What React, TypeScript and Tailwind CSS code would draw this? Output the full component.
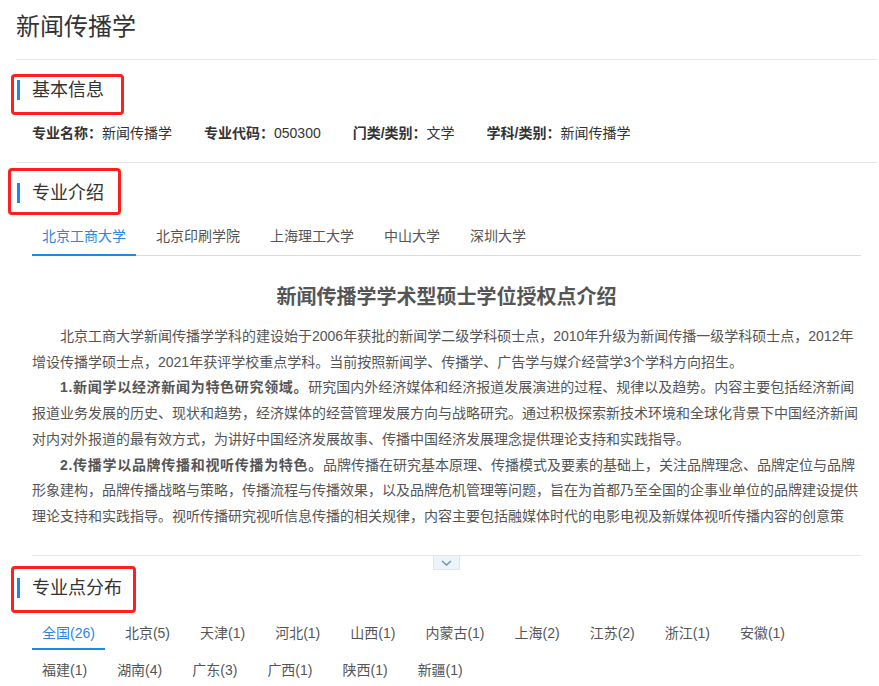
import React from "react";

const FONT = '"Liberation Sans", "Noto Sans CJK SC", sans-serif';

function SectionHeading({ title, box }: { title: string; box: string }) {
  return (
    <div className="relative flex items-center h-[20px]">
      <div className="ml-[1px] w-[3px] h-[20px] bg-[#1e88e5]" />
      <div className="ml-[12px] text-[18px] leading-[20px] text-[#333]">{title}</div>
      <div className={`absolute border-[3px] border-[#ff1f1f] rounded-[4px] ${box}`} />
    </div>
  );
}

const unis = ["北京工商大学", "北京印刷学院", "上海理工大学", "中山大学", "深圳大学"];
const regions = [
  "全国(26)",
  "北京(5)",
  "天津(1)",
  "河北(1)",
  "山西(1)",
  "内蒙古(1)",
  "上海(2)",
  "江苏(2)",
  "浙江(1)",
  "安徽(1)",
  "福建(1)",
  "湖南(4)",
  "广东(3)",
  "广西(1)",
  "陕西(1)",
  "新疆(1)",
];

export default function App() {
  return (
    <div
      className="w-[879px] h-[686px] overflow-hidden bg-white [text-spacing-trim:space-all]"
      style={{ fontFamily: FONT }}
    >
      <div className="pl-[16px] pr-[2px]">
        <div className="pt-[12px] text-[24px] leading-[30px] text-[#333]">新闻传播学</div>
        <div className="mt-[17px] border-t border-[#e6e6e6]" />

        {/* 基本信息 */}
        <div className="mt-[20px]">
          <SectionHeading title="基本信息" box="left-[-5px] top-[-6px] w-[113px] h-[41px]" />
        </div>
        <div className="mt-[23px] pl-[16px] flex gap-[32px] text-[14px] leading-[20px] text-[#333]">
          <div>
            <span className="font-bold">专业名称：</span>新闻传播学
          </div>
          <div>
            <span className="font-bold">专业代码：</span>050300
          </div>
          <div>
            <span className="font-bold">门类/类别：</span>文学
          </div>
          <div>
            <span className="font-bold">学科/类别：</span>新闻传播学
          </div>
        </div>
        <div className="mt-[19px] border-t border-[#e6e6e6]" />

        {/* 专业介绍 */}
        <div className="mt-[20px]">
          <SectionHeading title="专业介绍" box="left-[-8px] top-[-15px] w-[113px] h-[47px]" />
        </div>
        <div className="px-[16px]">
          <div className="mt-[13px] flex border-b border-[#dcdcdc]">
            {unis.map((u, i) => (
              <div
                key={u}
                className={
                  i === 0
                    ? "-mb-px mr-[10px] px-[10px] pt-[10px] pb-[8px] text-[14px] leading-[20px] border-b-2 border-[#1e88e5] text-[#2b87e0]"
                    : "-mb-px mr-[10px] px-[10px] pt-[10px] pb-[8px] text-[14px] leading-[20px] border-b-2 border-transparent text-[#555]"
                }
              >
                {u}
              </div>
            ))}
          </div>
          <div className="mt-[28px] text-center text-[20px] leading-[26px] font-bold text-[#555]">
            新闻传播学学术型硕士学位授权点介绍
          </div>
          <div className="mt-[14px] h-[206px] overflow-hidden text-[14px] leading-[25.7px] text-[#555] whitespace-nowrap">
            <div className="pl-[28px]">
              北京工商大学新闻传播学学科的建设始于2006年获批的新闻学二级学科硕士点，2010年升级为新闻传播一级学科硕士点，2012年
            </div>
            <div>增设传播学硕士点，2021年获评学校重点学科。当前按照新闻学、传播学、广告学与媒介经营学3个学科方向招生。</div>
            <div className="pl-[28px]">
              <span className="font-bold tracking-[0.7px]">1.新闻学以经济新闻为特色研究领域。</span>
              研究国内外经济媒体和经济报道发展演进的过程、规律以及趋势。内容主要包括经济新闻
            </div>
            <div>
              报道业务发展的历史、现状和趋势，经济媒体的经营管理发展方向与战略研究。通过积极探索新技术环境和全球化背景下中国经济新闻
            </div>
            <div>对内对外报道的最有效方式，为讲好中国经济发展故事、传播中国经济发展理念提供理论支持和实践指导。</div>
            <div className="pl-[28px]">
              <span className="font-bold tracking-[0.7px]">2.传播学以品牌传播和视听传播为特色。</span>
              品牌传播在研究基本原理、传播模式及要素的基础上，关注品牌理念、品牌定位与品牌
            </div>
            <div>
              形象建构，品牌传播战略与策略，传播流程与传播效果，以及品牌危机管理等问题，旨在为首都乃至全国的企事业单位的品牌建设提供
            </div>
            <div>
              理论支持和实践指导。视听传播研究视听信息传播的相关规律，内容主要包括融媒体时代的电影电视及新媒体视听传播内容的创意策
            </div>
          </div>
          <div className="mt-[25px] border-t border-[#e6e6e6]" />
          <div className="mx-auto w-[27px] h-[14px] flex items-center justify-center bg-[#edf3fb] border border-t-0 border-[#dde5ef]">
            <svg width="11" height="6" viewBox="0 0 11 6" fill="none">
              <path d="M1 1 L5.5 5 L10 1" stroke="#6f8fb8" strokeWidth="1.4" />
            </svg>
          </div>
        </div>

        {/* 专业点分布 */}
        <div className="mt-[8px]">
          <SectionHeading title="专业点分布" box="left-[-5px] top-[-12px] w-[125px] h-[47px]" />
        </div>
        <div className="mt-[15px] px-[16px] flex flex-wrap">
          {regions.map((r, i) => (
            <div
              key={r}
              className={
                i === 0
                  ? "mr-[10px] px-[10px] pt-[10px] pb-[5px] text-[14px] leading-[20px] border-b-2 border-[#1e88e5] text-[#2b87e0]"
                  : "mr-[10px] px-[10px] pt-[10px] pb-[5px] text-[14px] leading-[20px] border-b-2 border-transparent text-[#555]"
              }
            >
              {r}
            </div>
          ))}
        </div>
      </div>
    </div>
  );
}
